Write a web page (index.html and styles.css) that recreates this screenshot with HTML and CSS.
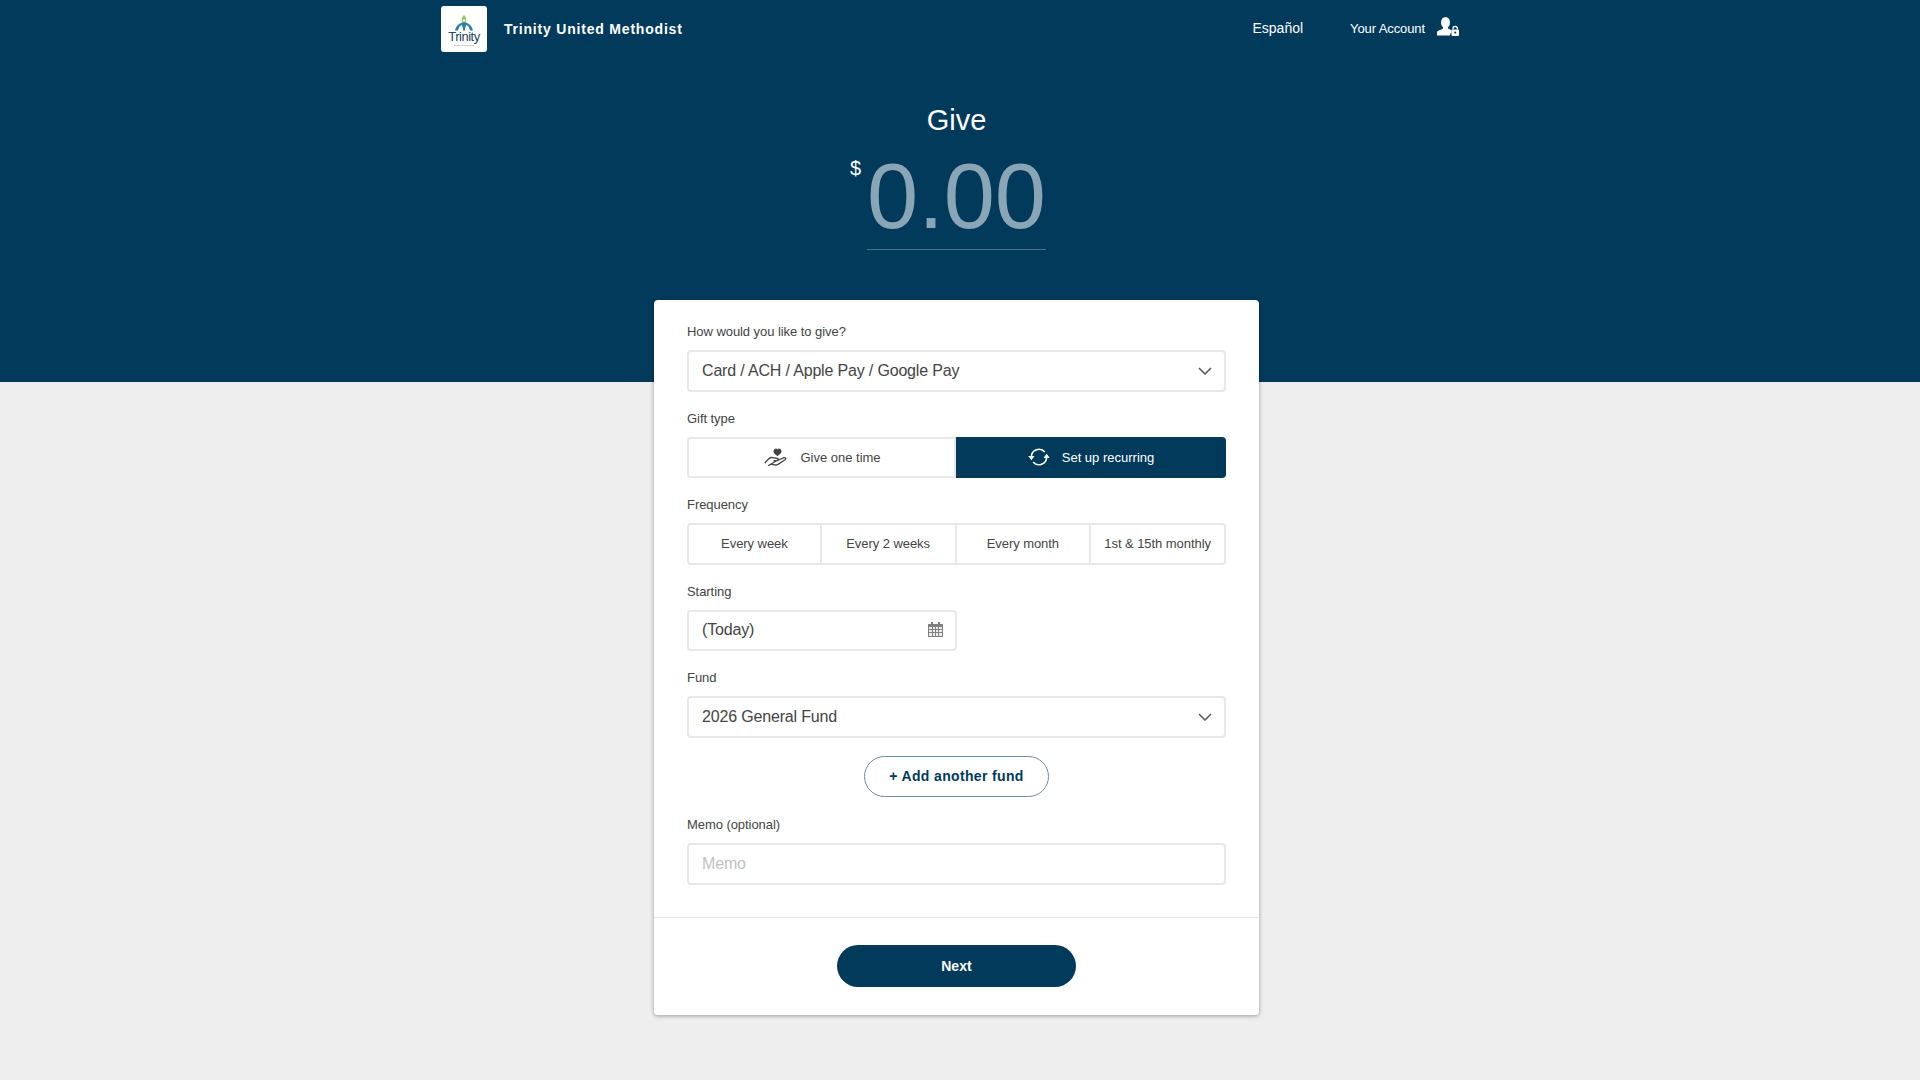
FILE: index.html
```html
<!DOCTYPE html>
<html lang="en">
<head>
    <meta charset="UTF-8">
    <title>Give - Trinity United Methodist</title>
    <link rel="stylesheet" href="styles.css">
</head>
<body>
    <section class="hero">
        <header class="topbar">
            <a class="brand">
                <span class="brand-logo">
                    <svg class="logo-mark" viewBox="0 0 20 16" width="20" height="16">
                        <path d="M10 0c2 2 2.800 5 2 8.500H8C7.200 5 8 2 10 0z" fill="#8fbf5a"/>
                        <circle cx="10" cy="5.500" r="1.300" fill="#fff"/>
                        <path d="M10 7.500c-4.500 0-8 3-9 8h3c.6-3 2-5 3.500-5.500C8.500 11 9 13 9 15.500h2c0-2.500.5-4.500 1.500-5.500 1.500.5 2.900 2.500 3.500 5.500h3c-1-5-4.500-8-9-8z" fill="#2b7fae"/>
                    </svg>
                    <span class="logo-text">Trinity</span>
                    <span class="logo-sub"></span>
                </span>
                <span class="brand-name">Trinity United Methodist</span>
            </a>
            <nav class="topnav">
                <a class="lang">Español</a>
                <a class="account">Your Account
                    <svg class="account-icon" viewBox="0 0 24 20" width="24" height="20">
                        <ellipse cx="9.500" cy="5.500" rx="4.500" ry="5.500" fill="#fff"/>
                        <path d="M7 9h5v2.500c2 .8 3.500 1.500 3.500 2.500v1.500c-1 .5-1.500 1.500-1.500 3H1v-3c0-2 4-2.500 6-4z" fill="#fff"/>
                        <path d="M17 12.500v-1a2.200 2.200 0 0 1 4.400 0v1" fill="none" stroke="#fff" stroke-width="1.300"/>
                        <rect x="15.500" y="12.500" width="7.500" height="6.500" rx="1" fill="#fff"/>
                        <circle cx="19.200" cy="15.500" r="1" fill="#023a5c"/>
                    </svg>
                </a>
            </nav>
        </header>
        <h1 class="hero-title">Give</h1>
        <div class="amount">
            <span class="amount-sign">$</span>
            <span class="amount-value">0.00</span>
        </div>
    </section>

    <main class="card">
        <form class="card-body">
            <div class="field">
                <label class="field-label">How would you like to give?</label>
                <div class="control">
                    <span>Card / ACH / Apple Pay / Google Pay</span>
                    <svg class="chevron" viewBox="0 0 14 8" width="14" height="8"><path d="M1 1l6 6 6-6" fill="none" stroke="#555" stroke-width="1.500"/></svg>
                </div>
            </div>
            <div class="field">
                <label class="field-label">Gift type</label>
                <div class="segments segments-gift">
                    <div class="segment">
                        <svg class="seg-icon" viewBox="0 0 24 18" width="24" height="18">
                            <path d="M13.500 8C10 5.700 9.500 4.500 9.500 3.200 9.500 1.700 11 .5 12 .5c.7 0 1.200.4 1.500 1 .3-.6.800-1 1.500-1 1 0 2.500 1.200 2.500 2.700 0 1.300-.5 2.500-4 4.800z" fill="#444"/>
                            <path d="M.8 15l4-4.200c1-1 2.500-1.500 4-1.200l4.700.9c1.200.2 1.200 2.100-.2 2.100H9.500M13 12.500l6.700-2.700c1.800-.6 2.800 1 1.400 2L14 16.400c-1 .6-2 .7-3 .5l-4-.7-2.500 1.300z" fill="none" stroke="#444" stroke-width="1.300" stroke-linejoin="round"/>
                        </svg>
                        <span>Give one time</span>
                    </div>
                    <div class="segment is-active">
                        <svg class="seg-icon" viewBox="0 0 24 20" width="22" height="18">
                            <path d="M3.500 10a8.500 8.500 0 0 1 15-5.500M20.500 10a8.500 8.500 0 0 1-15 5.500" fill="none" stroke="#fff" stroke-width="1.700"/>
                            <path d="M0 9h7l-3.500 4.500zM17 11h7l-3.500-4.500z" fill="#fff"/>
                        </svg>
                        <span>Set up recurring</span>
                    </div>
                </div>
            </div>
            <div class="field">
                <label class="field-label">Frequency</label>
                <div class="segments">
                    <div class="segment">Every week</div>
                    <div class="segment">Every 2 weeks</div>
                    <div class="segment">Every month</div>
                    <div class="segment">1st &amp; 15th monthly</div>
                </div>
            </div>
            <div class="field">
                <label class="field-label">Starting</label>
                <div class="control control-half">
                    <span>(Today)</span>
                    <svg class="calendar" viewBox="0 0 15 15" width="15" height="15">
                        <path d="M0 2h15v13H0z" fill="#808080"/>
                        <path d="M3 0h2v3H3zM10 0h2v3h-2z" fill="#808080"/>
                        <path d="M1 5h3v2H1zM5 5h2v2H5zM8 5h2v2H8zM11 5h3v2h-3zM1 8h3v2H1zM5 8h2v2H5zM8 8h2v2H8zM11 8h3v2h-3zM1 11h3v3H1zM5 11h2v3H5zM8 11h2v3H8zM11 11h3v3h-3z" fill="#ececec"/>
                    </svg>
                </div>
            </div>
            <div class="field">
                <label class="field-label">Fund</label>
                <div class="control">
                    <span>2026 General Fund</span>
                    <svg class="chevron" viewBox="0 0 14 8" width="14" height="8"><path d="M1 1l6 6 6-6" fill="none" stroke="#555" stroke-width="1.500"/></svg>
                </div>
            </div>
            <div class="add-row">
                <button type="button" class="btn-add">+ Add another fund</button>
            </div>
            <div class="field">
                <label class="field-label">Memo (optional)</label>
                <div class="control"><span class="placeholder">Memo</span></div>
            </div>
        </form>
        <div class="card-footer">
            <button type="button" class="btn-next">Next</button>
        </div>
    </main>
</body>
</html>
```

FILE: styles.css
```css
html, body {
    margin: 0;
    padding: 0;
}
body {
    height: 1080px;
    overflow: hidden;
    background-color: #eeeeee;
    font-family: "Liberation Sans", Arial, sans-serif;
    color: #444;
}
.hero {
    height: 382px;
    background-color: #023a5c;
    color: #fff;
    padding-right: 7px;
    box-sizing: border-box;
}
.topbar {
    width: 1019px;
    margin-left: 441px;
    padding-top: 6px;
    display: flex;
    justify-content: space-between;
    align-items: center;
    box-sizing: border-box;
}
.brand {
    display: flex;
    align-items: center;
}
.brand-logo {
    width: 46px;
    height: 46px;
    padding-top: 9px;
    background-color: #fff;
    border-radius: 3px;
    display: flex;
    flex-direction: column;
    align-items: center;
    box-sizing: border-box;
}
.logo-text {
    font-size: 13px;
    line-height: 11px;
    letter-spacing: -0.5px;
    color: #1d4560;
}
.logo-sub {
    width: 20px;
    height: 1px;
    margin-top: 3px;
    background-color: #cfcfcf;
}
.brand-name {
    margin-left: 17px;
    margin-bottom: 1px;
    font-size: 14px;
    font-weight: bold;
    letter-spacing: 0.8px;
}
.topnav {
    display: flex;
    align-items: center;
    margin-bottom: 2px;
    font-size: 14px;
}
.lang {
    margin-right: 47px;
}
.account {
    display: flex;
    align-items: center;
    font-size: 13px;
    letter-spacing: -0.1px;
}
.account-icon {
    margin-left: 11px;
    margin-bottom: 3px;
}
.hero-title {
    margin: 51px 0 0;
    font-size: 29px;
    line-height: 34px;
    font-weight: normal;
    text-align: center;
}
.amount {
    width: 179px;
    height: 103px;
    margin: 0 auto;
    padding-top: 9px;
    border-bottom: 1px solid #4f7288;
    display: flex;
    justify-content: center;
    position: relative;
}
.amount-value {
    font-size: 92px;
    line-height: 100px;
    color: #8aa5b5;
}
.amount-sign {
    position: absolute;
    left: -17px;
    top: 19px;
    font-size: 20px;
    line-height: 24px;
}
.card {
    width: 605px;
    height: 715px;
    margin: -82px auto 0;
    position: relative;
    left: -3.5px;
    background-color: #fff;
    border-radius: 4px;
    box-shadow: 0 1px 4px rgba(0, 0, 0, 0.35);
    display: flex;
    flex-direction: column;
    box-sizing: border-box;
}
.card-body {
    flex: 1;
    padding: 23px 33px 0;
    display: flex;
    flex-direction: column;
}
.field {
    margin-bottom: 18px;
}
.field-label {
    display: block;
    font-size: 13px;
    line-height: 18px;
    margin-bottom: 9px;
    letter-spacing: -0.06px;
}
.control {
    height: 41.5px;
    padding: 0 12px 0 13px;
    border: 2px solid #e8e8e8;
    border-radius: 4px;
    display: flex;
    align-items: center;
    justify-content: space-between;
    font-size: 16px;
    letter-spacing: -0.17px;
    box-sizing: border-box;
}
.control-half {
    width: 270px;
}
.calendar {
    margin-bottom: 1px;
}
.placeholder {
    color: #c2c2c2;
}
.segments {
    height: 41.5px;
    display: grid;
    grid-auto-flow: column;
    grid-auto-columns: 1fr;
}
.segments-gift {
    grid-template-columns: 269px 1fr;
}
.segments-gift .segment {
    padding-left: 2px;
    letter-spacing: 0;
}
.segment {
    display: flex;
    align-items: center;
    justify-content: center;
    gap: 12px;
    font-size: 13px;
    letter-spacing: -0.06px;
    border: 2px solid #e8e8e8;
    border-left-width: 0;
    box-sizing: border-box;
}
.segment:first-child {
    border-left-width: 2px;
    border-radius: 4px 0 0 4px;
}
.segment:last-child {
    border-radius: 0 4px 4px 0;
}
.segment.is-active {
    background-color: #023a5c;
    border-color: #023a5c;
    color: #fff;
}
.add-row {
    display: flex;
    justify-content: center;
    margin-bottom: 19px;
}
.btn-add {
    width: 185px;
    height: 41.5px;
    background-color: #fff;
    border: 1px solid #6a8ba3;
    border-radius: 21px;
    color: #023a5c;
    font-family: inherit;
    font-size: 14px;
    font-weight: bold;
    letter-spacing: 0.35px;
}
.card-footer {
    height: 98px;
    border-top: 1px solid #e6e6e6;
    display: flex;
    justify-content: center;
    align-items: center;
    box-sizing: border-box;
}
.btn-next {
    width: 239px;
    height: 42px;
    margin-bottom: 1px;
    background-color: #023a5c;
    border: 0;
    border-radius: 21px;
    color: #fff;
    font-family: inherit;
    font-size: 14px;
    font-weight: bold;
    letter-spacing: 0.1px;
}
```
